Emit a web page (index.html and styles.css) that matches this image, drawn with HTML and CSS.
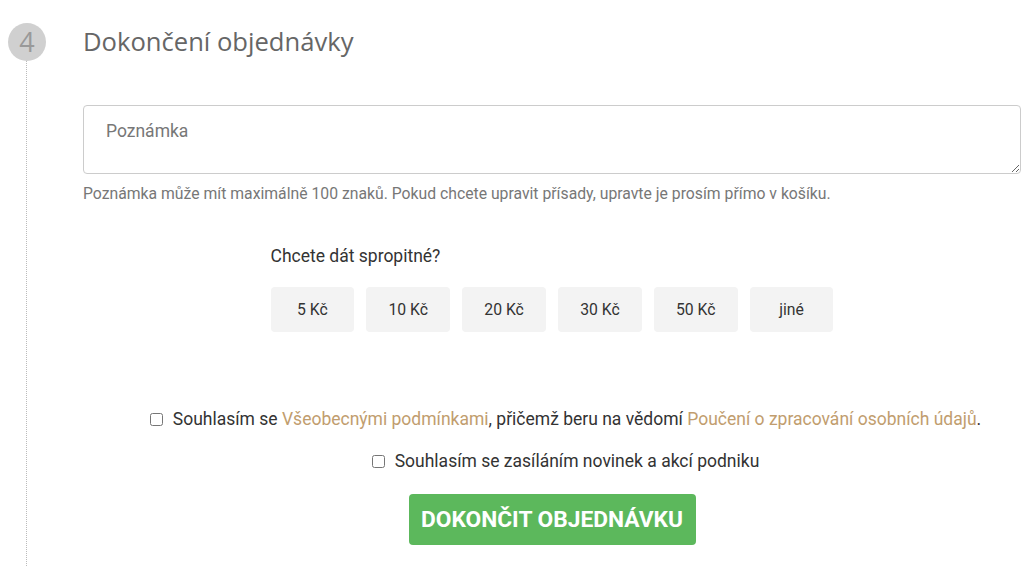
FILE: index.html
```html
<!DOCTYPE html>
<html lang="cs">
<head>
<meta charset="utf-8">
<link rel="stylesheet" href="styles.css">
</head>
<body>
<div class="step">
  <div class="rail">
    <div class="num">4</div>
    <div class="line"></div>
  </div>
  <div class="content">
    <h2 class="title">Dokončení objednávky</h2>
    <textarea class="note" placeholder="Poznámka"></textarea>
    <p class="help">Poznámka může mít maximálně 100 znaků. Pokud chcete upravit přísady, upravte je prosím přímo v košíku.</p>
    <div class="tips">
      <div class="tips-q">Chcete dát spropitné?</div>
      <div class="tips-row">
        <button class="tip">5 Kč</button>
        <button class="tip">10 Kč</button>
        <button class="tip">20 Kč</button>
        <button class="tip">30 Kč</button>
        <button class="tip">50 Kč</button>
        <button class="tip">jiné</button>
      </div>
    </div>
    <div class="agree">
      <label class="check"><input type="checkbox"><span>Souhlasím se <a href="#">Všeobecnými podmínkami</a>, přičemž beru na vědomí <a href="#">Poučení o zpracování osobních údajů</a>.</span></label>
      <label class="check"><input type="checkbox"><span>Souhlasím se zasíláním novinek a akcí podniku</span></label>
    </div>
    <div class="submit-wrap">
      <button class="submit">DOKONČIT OBJEDNÁVKU</button>
    </div>
  </div>
</div>
</body>
</html>
```

FILE: styles.css
```css
html, body {
  margin: 0;
  padding: 0;
  background: #fff;
  font-family: Roboto, "Liberation Sans", sans-serif;
  font-size: 17.5px;
  color: #333;
}
.step {
  display: flex;
  padding: 23px 10px 0 8px;
  height: 543px;
  overflow: hidden;
}
.rail {
  width: 38px;
  flex: none;
  display: flex;
  flex-direction: column;
  align-items: center;
}
.num {
  width: 38px;
  height: 38px;
  border-radius: 50%;
  background: #d0d0d0;
  color: #999;
  font-family: "Open Sans", sans-serif;
  font-size: 27px;
  line-height: 38px;
  text-align: center;
  flex: none;
}
.line {
  flex: 1;
  border-left: 1px dotted #bbb;
  margin-left: -1px;
}
.content {
  flex: 1;
  margin-left: 37px;
}
.title {
  margin: 0;
  font-family: "Open Sans", sans-serif;
  font-weight: 400;
  font-size: 25.6px;
  line-height: 38px;
  color: #666;
}
.note {
  display: block;
  box-sizing: border-box;
  width: 100%;
  height: 69px;
  margin-top: 44px;
  border: 1px solid #ccc;
  border-radius: 4px;
  padding: 15px 22px;
  font-family: Roboto, sans-serif;
  font-size: 17.5px;
  color: #333;
  resize: vertical;
  outline: none;
}
.note::placeholder {
  color: #777;
}
.help {
  margin: 9px 0 0;
  font-size: 15.75px;
  line-height: 22px;
  color: #777;
}
.tips {
  width: 563px;
  margin: 39px auto 0;
}
.tips-q {
  font-size: 17.5px;
  line-height: 24px;
  color: #333;
}
.tips-row {
  display: flex;
  gap: 12px;
  margin-top: 19px;
}
.tip {
  width: 84px;
  height: 45px;
  border: none;
  border-radius: 4px;
  background: #f3f3f3;
  font-family: Roboto, sans-serif;
  font-size: 15.75px;
  color: #333;
  padding: 0;
}
.agree {
  margin-top: 75px;
  display: flex;
  flex-direction: column;
  align-items: center;
  gap: 18px;
  padding-left: 27px;
}
.check {
  display: flex;
  align-items: center;
  font-size: 17.5px;
  line-height: 24px;
  color: #333;
}
.check input {
  width: 13px;
  height: 13px;
  margin: 0 10px 0 0;
}
.check a {
  color: #c19d6e;
  text-decoration: none;
}
.submit-wrap {
  display: flex;
  justify-content: center;
  margin-top: 21px;
}
.submit {
  width: 287px;
  height: 51px;
  border: none;
  border-radius: 4px;
  background: #5cb85c;
  color: #fff;
  font-family: Roboto, sans-serif;
  font-weight: 700;
  font-size: 22.75px;
  padding: 0;
}
```
